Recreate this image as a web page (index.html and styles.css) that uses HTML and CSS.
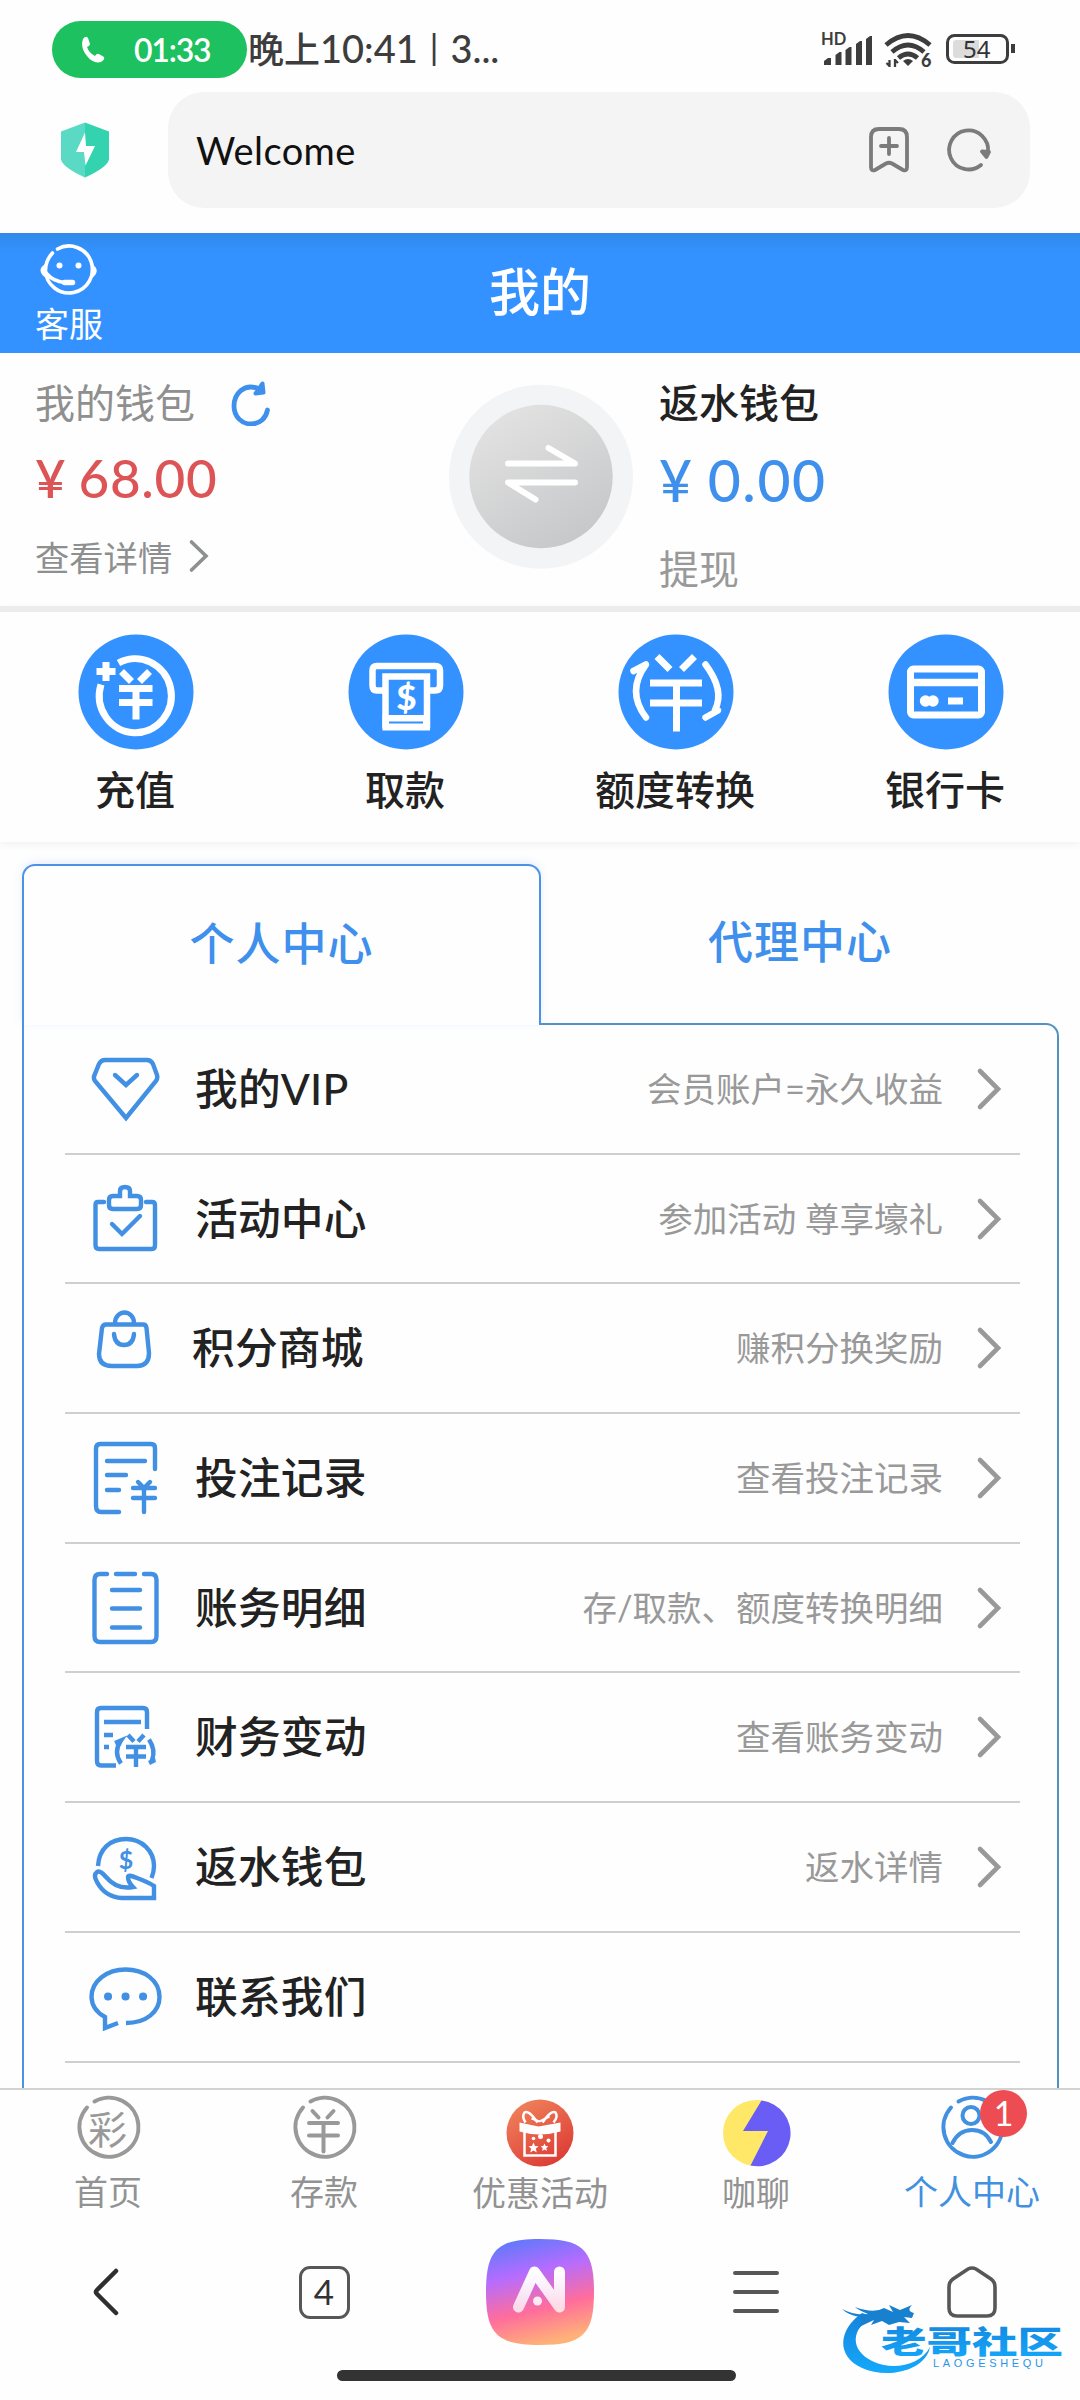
FILE: index.html
```html
<!DOCTYPE html>
<html lang="zh-CN">
<head>
<meta charset="utf-8">
<title>Welcome</title>
<link rel="stylesheet" href="styles.css">
</head>
<body>
<div class="screen">
  <header class="status">
    <div class="call-pill">
      <svg class="call-icon" width="24" height="28" viewBox="0 0 24 28"><path d="M2 3Q5-1 7 2L9 8Q9 10 6 11Q8 17 14 20Q16 17 18 18L23 21Q24 24 20 26Q12 28 6 20Q-1 12 2 3Z" fill="#fff"/></svg>
      <span>01:33</span>
    </div>
    <span class="clock"><span class="clock-cjk">晚上</span>10:41<span class="bar">|</span>3...</span>
    <svg class="status-icons" width="200" height="40" viewBox="820 30 200 40">
      <g fill="#3d3d3d">
        <text x="821" y="45" class="hd">HD</text>
        <path d="M824 65v-4l4-3h3v7zM835.500 65v-10l4-3h2v13zM845.500 65v-15l4-3h2v18zM856 65v-21l4-3h2v24zM866 65v-26l4-3h2v29z"/>
        <path d="M903 61q5-4 10 0l-5 5z"/>
        <text x="921" y="67" class="wifi-num">6</text>
      </g>
      <g fill="none" stroke="#3d3d3d" stroke-width="4.800">
        <path d="M886 45Q908 26 930 45"/><path d="M892 52Q908 38 924 52"/><path d="M898.500 58Q908 50 917.500 58"/>
        <path d="M889.500 67v-7M895 59v8M889.500 66l-3-3M895 60l3 3" stroke-width="2.300"/>
        <rect x="947.500" y="35.500" width="60" height="27" rx="7" stroke-width="3"/>
        <path d="M1013 44v9" stroke-width="4"/>
      </g>
      <path d="M953 43q0-3 3-3h23v18h-23q-3 0-3-3z" fill="#dcdcdc"/>
      <text x="963" y="57.800" class="battery">54</text>
    </svg>
  </header>

  <div class="browser-bar">
    <svg class="shield" width="50" height="58" viewBox="60 121.500 50 58">
      <path d="M85 123L109 132V160Q107 168 85 178Z" fill="#34d3b0"/>
      <path d="M85 123L61 132V160Q63 168 85 178Z" fill="#5adac4"/>
      <path d="M85 133L76 152.500H84L85.500 166L95 146.500H86Z" fill="#fff"/>
    </svg>
    <div class="address">
      <span>Welcome</span>
      <svg width="124" height="50" viewBox="868 125 124 50" fill="none" stroke="#7b7b7b" stroke-width="3.800" stroke-linecap="round" stroke-linejoin="round">
        <path d="M871 167V137Q871 129 879 129H899Q907 129 907 137V167Q907 171.500 903 170L892 163.500Q889 162 886 163.500L875 170Q871 171.500 871 167ZM889 138V154M881 146H897"/>
        <path d="M981 165A19.500 19.500 0 1 1 988 152"/><path d="M982 151.500L989 152L986.500 157Z" fill="#7b7b7b"/>
      </svg>
    </div>
  </div>

  <div class="page-head">
    <a class="service">
      <svg width="62" height="54" viewBox="38.500 242.500 62 54" fill="none" stroke="#fff" stroke-width="3.600" stroke-linecap="round">
        <path d="M58 248.500A23.500 23.500 0 1 1 46 270Q46 260 53 252.500"/>
        <path d="M47 273Q54 281 65 282"/><path d="M65 282H73" stroke-width="5.500"/>
        <path d="M46 264Q37 270 47 277ZM92 264Q101 270 92 277Z" fill="#fff" stroke-width="1.500"/>
        <circle cx="60" cy="265" r="3" fill="#fff" stroke="none"/><circle cx="79" cy="265" r="3" fill="#fff" stroke="none"/>
      </svg>
      <span>客服</span>
    </a>
    <h1>我的</h1>
  </div>

  <section class="wallet">
    <div class="wallet-main">
      <div class="wallet-name">我的钱包
        <svg width="42" height="46" viewBox="229 381 42 46" fill="none" stroke="#3f8fec" stroke-width="4.800" stroke-linecap="round"><path d="M257 389.500C243 384 233 395 233 407C233 418 241 425 250 425C259 425 265 419 266.500 411"/><path d="M261.500 384.500L262.500 393.500L254.500 394.500Z" fill="#3f8fec" stroke-linejoin="round" stroke-width="4"/></svg>
      </div>
      <div class="amount red">¥<span>68.00</span></div>
      <div class="detail">查看详情
        <svg width="22" height="36" viewBox="188 539 22 36"><path d="M191.500 543L206 557L191.500 571" fill="none" stroke="#8e8f8f" stroke-width="3.600" stroke-linecap="round"/></svg>
      </div>
    </div>
    <svg class="swap" width="184" height="186" viewBox="449 384 184 186">
      <defs><linearGradient id="swapFill" x1="0.200" y1="0" x2="0.800" y2="1"><stop offset="0" stop-color="#e3e3e2"/><stop offset="1" stop-color="#c5c6c9"/></linearGradient></defs>
      <circle cx="541" cy="476.800" r="92" fill="#f3f4f6"/>
      <circle cx="541" cy="476.500" r="71.700" fill="url(#swapFill)"/>
      <path d="M508 463.500H575L548.500 448M575 482.500H508L535.500 499.500" fill="none" stroke="#fff" stroke-width="6" stroke-linecap="round" stroke-linejoin="round"/>
    </svg>
    <div class="wallet-rebate">
      <div class="wallet-name dark">返水钱包</div>
      <div class="amount blue">¥<span>0.00</span></div>
      <div class="withdraw">提现</div>
    </div>
  </section>

  <section class="actions">
    <a class="action">
      <svg width="116" height="116" viewBox="77.500 633.500 116 116">
        <circle cx="135.500" cy="691.500" r="57.500" fill="#3392ff"/>
        <path d="M118 662.500A36 37 0 1 1 100.500 684M96 671H115M105.500 661.500V680.500M121 671L131 681M149 671L139 681M118.500 688H152M118.500 702H152M135.500 688V719" fill="none" stroke="#fff" stroke-width="7"/>
      </svg>
      <span>充值</span>
    </a>
    <a class="action">
      <svg width="116" height="116" viewBox="347 633.500 116 116">
        <circle cx="405" cy="691.500" r="57.500" fill="#3392ff"/>
        <path d="M383 690H376Q371.500 690 371.500 685V670Q371.500 665.500 376 665.500H434Q439 665.500 439 670V685Q439 690 434 690H427M384.500 728V676H426V728" fill="none" stroke="#fff" stroke-width="6.500"/>
        <path d="M381.500 714.500H429V730H381.500Z" fill="#fff"/><path d="M388 722H422" stroke="#3392ff" stroke-width="2"/>
        <text x="405.500" y="709.500" class="dollar-bold">$</text>
      </svg>
      <span>取款</span>
    </a>
    <a class="action">
      <svg width="116" height="116" viewBox="618 633.500 116 116">
        <circle cx="676" cy="691.500" r="57.500" fill="#3392ff"/>
        <g fill="none" stroke="#fff" stroke-width="7">
          <path d="M657 656L670 669M694.500 656L681.500 669M650 682.500H702M650 702.500H702M676.500 682V731"/>
          <path d="M633.500 670.500L646 664Q626 691 646 717M705.500 664Q725 690 715 709.500L718 710L705.500 717" stroke-width="6.500" stroke-linecap="round" stroke-linejoin="round"/>
        </g>
      </svg>
      <span>额度转换</span>
    </a>
    <a class="action">
      <svg width="116" height="116" viewBox="888 633.500 116 116">
        <circle cx="946" cy="691.500" r="57.500" fill="#3392ff"/>
        <rect x="910.500" y="668.500" width="71" height="46" rx="3" fill="none" stroke="#fff" stroke-width="7"/>
        <path d="M908 682H984" stroke="#fff" stroke-width="7.500"/>
        <circle cx="925.500" cy="700.500" r="5.700" fill="#fff"/><circle cx="933" cy="700.500" r="5.700" fill="#fff"/><path d="M948 697H963V704H948Z" fill="#fff"/>
      </svg>
      <span>银行卡</span>
    </a>
  </section>

  <section class="center">
    <nav class="tabs">
      <a class="tab active">个人中心</a>
      <a class="tab">代理中心</a>
    </nav>
    <div class="menu">
      <a class="row">
        <svg class="row-icon" viewBox="87 1048 76 80"><path d="M105 1059H147Q151 1059 153 1063L157 1074Q158 1077 156 1080L126 1117L95 1080Q93 1077 94.500 1074L99 1063Q101 1059 105 1059Z"/><path d="M115 1074L126 1084L137 1074"/></svg>
        <span class="name">我的VIP</span><span class="hint">会员账户=永久收益</span>
        <svg class="chev" viewBox="0 0 28 44"><path d="M4 4L22 22L4 40"/></svg>
      </a>
      <a class="row">
        <svg class="row-icon" viewBox="87 1178 76 80"><path d="M104 1201H98Q95.500 1201 95.500 1204V1244Q95.500 1248 99 1248H152Q155 1248 155 1244V1204Q155 1201 152 1201H146M113 1195H120V1190Q120 1186 125 1186Q130 1186 130 1190V1195H137Q141 1195 141 1199V1204Q141 1208 137 1208H113Q109 1208 109 1204V1199Q109 1195 113 1195ZM112 1223L122 1233L140 1215"/></svg>
        <span class="name">活动中心</span><span class="hint">参加活动 尊享壕礼</span>
        <svg class="chev" viewBox="0 0 28 44"><path d="M4 4L22 22L4 40"/></svg>
      </a>
      <a class="row">
        <svg class="row-icon" viewBox="87 1308 76 80"><path d="M106 1324.500H143Q146 1324.500 146.500 1328L149 1353Q149 1366 137 1366H112Q99 1366 99 1354L102 1328Q103 1324.500 106 1324.500ZM115 1323A9.500 10.500 0 0 1 134 1323M114 1334Q115 1345 124 1345Q133 1345 134 1334"/></svg>
        <span class="name shift">积分商城</span><span class="hint">赚积分换奖励</span>
        <svg class="chev" viewBox="0 0 28 44"><path d="M4 4L22 22L4 40"/></svg>
      </a>
      <a class="row">
        <svg class="row-icon" viewBox="87 1437 76 80"><path d="M155 1468V1447Q155 1443 151 1443H100Q96 1443 96 1448V1505Q96 1511 101 1511H119M107 1460H145M107 1474H126M107 1489H119M138 1481L144 1487L150 1481M133 1487H155M133 1497H155M144 1487V1511"/></svg>
        <span class="name">投注记录</span><span class="hint">查看投注记录</span>
        <svg class="chev" viewBox="0 0 28 44"><path d="M4 4L22 22L4 40"/></svg>
      </a>
      <a class="row">
        <svg class="row-icon" viewBox="87 1567 76 80"><path d="M107 1573H100Q94.500 1573 94.500 1579V1635Q94.500 1641 100 1641H151Q156.500 1641 156.500 1635V1579Q156.500 1573 151 1573H144M116 1573H135M112 1589H140M112 1607.500H140M112 1626.500H140"/></svg>
        <span class="name">账务明细</span><span class="hint">存/取款、额度转换明细</span>
        <svg class="chev" viewBox="0 0 28 44"><path d="M4 4L22 22L4 40"/></svg>
      </a>
      <a class="row">
        <svg class="row-icon butt" viewBox="87 1697 76 80"><path d="M147 1729V1712Q147 1708 143 1708H101Q97 1708 97 1712V1761Q97 1765.500 101 1765.500H116M104 1722H141M104 1735H113M104 1747H109M128 1735L134 1741.500M144 1735L138 1741.500M126 1747H146M126 1756.500H146M136 1747V1767M115 1743L121 1740.500Q113 1752 121 1763.500M149 1739.500Q156 1750 152 1760L155 1760L149 1763"/></svg>
        <span class="name">财务变动</span><span class="hint">查看账务变动</span>
        <svg class="chev" viewBox="0 0 28 44"><path d="M4 4L22 22L4 40"/></svg>
      </a>
      <a class="row">
        <svg class="row-icon butt" viewBox="87 1826 76 80"><path d="M98 1865C99 1848 110 1838 126 1838C142 1838 154 1850 154 1865Q154 1871 151.500 1877M97 1871Q93 1874 97 1881Q105 1896 122 1897H154V1885Q148 1881 137 1877Q128 1873 128 1876Q128 1881 133 1886Q117 1889 106 1876Q100 1869 97 1871Z"/><text x="126" y="1868" class="dollar">$</text></svg>
        <span class="name">返水钱包</span><span class="hint">返水详情</span>
        <svg class="chev" viewBox="0 0 28 44"><path d="M4 4L22 22L4 40"/></svg>
      </a>
      <a class="row">
        <svg class="row-icon butt" viewBox="87 1956 76 80"><path d="M126 2022C146 2022 159.500 2011 159.500 1996C159.500 1979 144 1968.500 125.500 1968.500C107 1968.500 91.500 1980 91.500 1996Q92 2009 105 2016V2027L118 2022"/><path d="M108 1995.500h.1M125.500 1995.500h.1M143 1995.500h.1" class="dots"/></svg>
        <span class="name">联系我们</span>
      </a>
    </div>
  </section>

  <nav class="tabbar">
    <a class="item">
      <svg width="70" height="70" viewBox="74 2093 70 70" fill="none" stroke="#999" stroke-width="4" stroke-linecap="round"><path d="M95.500 2100.500A29.500 29.500 0 1 1 88 2106.500"/><text x="108.500" y="2143" class="cai">彩</text></svg>
      <span>首页</span>
    </a>
    <a class="item">
      <svg width="70" height="70" viewBox="290 2093 70 70" fill="none" stroke="#999" stroke-width="4" stroke-linecap="round"><path d="M311.500 2100.500A29.500 29.500 0 1 1 304 2106.500M313.500 2110L319.500 2116.500M334.500 2110L328.500 2116.500M310 2122H339M310 2134.500H339M324.500 2122V2150.500"/></svg>
      <span>存款</span>
    </a>
    <a class="item low">
      <svg width="70" height="70" viewBox="505.500 2097.500 70 70">
        <defs><linearGradient id="gift" x1="0" y1="0" x2="0.600" y2="1"><stop offset="0" stop-color="#f2895f"/><stop offset="1" stop-color="#dd3f37"/></linearGradient></defs>
        <circle cx="540.500" cy="2132.500" r="33.500" fill="url(#gift)"/>
        <path d="M538 2122Q529 2109 525 2112Q522 2116 526 2122M543 2122Q552 2109 556 2112Q559 2116 554 2122" fill="none" stroke="#fff" stroke-width="2.500"/>
        <path d="M532 2118L540 2121L550 2116" stroke="#fff" stroke-width="2" fill="none"/>
        <path d="M520 2122L539 2126L561 2122V2131Q540 2137 520 2131Z" fill="#fff"/>
        <path d="M525 2131V2155H556V2131" fill="none" stroke="#fff" stroke-width="2.500"/>
        <path d="M534 2142l1.500 3.500 3.500.3-2.700 2.400 1 3.800-3.300-2-3.300 2 1-3.800-2.700-2.400 3.500-.3zM545 2143l1.200 2.500 2.600.2-2 2 .6 2.800-2.400-1.500-2.400 1.500.6-2.800-2-2 2.600-.2z" fill="#fff"/><circle cx="534" cy="2138" r="1.800" fill="#fff"/><circle cx="549" cy="2140" r="2" fill="#fff"/><circle cx="541" cy="2136" r="2.500" fill="#fff"/>
      </svg>
      <span>优惠活动</span>
    </a>
    <a class="item low">
      <svg width="70" height="70" viewBox="722 2097.500 70 70"><circle cx="757" cy="2132.500" r="33" fill="#ffe768"/><path d="M762.500 2100L744 2130.500H769L751.500 2165A33 33 0 1 0 762.500 2100Z" fill="#6a5df5"/></svg>
      <span>咖聊</span>
    </a>
    <a class="item on">
      <svg width="70" height="70" viewBox="938 2093 70 70" fill="none" stroke="#4290e0" stroke-width="4" stroke-linecap="round"><path d="M959.500 2100.500A29.500 29.500 0 1 1 952 2106.500"/><circle cx="972" cy="2114.500" r="8.500"/><path d="M953.500 2142Q960 2129 973 2129Q986 2129 992 2141"/></svg>
      <span>个人中心</span>
      <b class="badge">1</b>
    </a>
  </nav>

  <nav class="toolbar">
    <a><svg width="60" height="60" viewBox="78 2263 60 60" fill="none" stroke="#2f2f2f" stroke-width="4.500" stroke-linecap="round"><path d="M116 2272L97 2291Q95 2293 97 2295L116 2314"/></svg></a>
    <a><b class="tab-count">4</b></a>
    <a><svg width="108" height="106" viewBox="486 2239 108 106">
      <defs><linearGradient id="ai" x1="0.250" y1="0" x2="0.500" y2="1"><stop offset="0" stop-color="#5e79fb"/><stop offset=".33" stop-color="#b56cff"/><stop offset=".68" stop-color="#ff6d9c"/><stop offset="1" stop-color="#ffb277"/></linearGradient>
      <linearGradient id="aiA" x1="0" y1="0" x2="0" y2="1"><stop offset="0" stop-color="#fff"/><stop offset="1" stop-color="#fff" stop-opacity=".75"/></linearGradient></defs>
      <path d="M540 2239C583 2239 594 2250 594 2292S583 2345 540 2345S486 2334 486 2292S497 2239 540 2239Z" fill="url(#ai)"/>
      <path d="M518.500 2307L534.500 2272L559.500 2307V2272" fill="none" stroke="url(#aiA)" stroke-width="11" stroke-linecap="round" stroke-linejoin="round"/><circle cx="537.500" cy="2301" r="4.500" fill="#fff" opacity=".85"/>
    </svg></a>
    <a><svg width="60" height="60" viewBox="726 2263 60 60" stroke="#575757" stroke-width="4" stroke-linecap="round"><path d="M735 2274H777M735 2293H777M735 2312H777"/></svg></a>
    <a><svg width="60" height="60" viewBox="942 2262 60 60" fill="none" stroke="#575757" stroke-width="3.600"><path d="M968 2269Q972 2267 976 2269L991 2279Q995 2282 995 2287V2308Q995 2316 987 2316H957Q949 2316 949 2308V2287Q949 2282 953 2279Z"/></svg></a>
  </nav>
  <div class="home-bar"></div>

  <svg class="watermark" width="236" height="84" viewBox="836 2296 236 84">
    <defs><linearGradient id="wm" x1="0" y1="0" x2="0" y2="1"><stop offset="0" stop-color="#1583dc"/><stop offset="1" stop-color="#14a9fb"/></linearGradient></defs>
    <path d="M862 2313C838 2330 836 2356 862 2368C888 2380 926 2370 930 2347C920 2366 892 2371 872 2361C850 2350 850 2328 874 2317Z" fill="url(#wm)"/>
    <path d="M842 2309Q855 2316 868 2314Q858 2310 855 2307Q874 2314 884 2308L893 2312L889 2305L900 2310L912 2305Q906 2311 914 2313L912 2318L904 2317L910 2323L899 2322L889 2325L882 2321L871 2325L874 2320L859 2327Q863 2320 860 2317Q848 2315 842 2309Z" fill="#1781cf"/>
    <text x="881" y="2353" textLength="182" lengthAdjust="spacingAndGlyphs" class="wm-name">老哥社区</text>
    <text x="933" y="2366.500" textLength="110" class="wm-latin">LAOGESHEQU</text>
  </svg>
</div>
</body>
</html>
```
FILE: styles.css
```css
* { box-sizing: border-box; }
body { margin: 0; background: #fff; font-family: Lato, "Noto Sans CJK SC", sans-serif; color: #222; }
svg { display: block; flex: none; }
.screen { position: relative; width: 1080px; height: 2400px; overflow: hidden; background: #fefefe; display: flex; flex-direction: column; }

.status { height: 92px; padding: 21px 60px 15px 52px; display: flex; align-items: flex-start; }
.call-pill { width: 195px; height: 57px; border-radius: 29px; background: #1dc15f; color: #fff; display: flex; align-items: center; padding-left: 29px; gap: 29px; font-size: 32px; font-weight: 600; line-height: 55px; white-space: nowrap; }
.call-pill span { letter-spacing: -1.200px; }
.clock { margin-left: 1px; line-height: 55px; font-size: 38px; font-weight: 500; color: #3d3d3d; white-space: nowrap; width: 300px; letter-spacing: 0; }
.clock-cjk { font-size: 36px; letter-spacing: 0; }
.clock .bar { margin: 0 12px; font-size: 34px; position: relative; top: -3px; }
.status-icons { margin: 9px 0 0 auto; }
.hd { font: 700 16.500px Lato, sans-serif; }
.wifi-num { font: 900 18px Lato, sans-serif; }
.battery { font: 400 24px "Noto Sans", sans-serif; fill: #333; }

.browser-bar { height: 141px; padding: 0 50px 25px 60px; display: flex; align-items: center; justify-content: space-between; }
.address { width: 862px; height: 116px; border-radius: 36px; background: #f4f4f4; display: flex; align-items: center; justify-content: space-between; padding: 0 38px 0 28px; font-size: 38px; letter-spacing: .4px; color: #111; }

.page-head { height: 120px; background: linear-gradient(#318ae9, #3392ff 20px); color: #fff; display: grid; grid-template-columns: 138px 1fr 138px; align-items: center; }
.service { height: 120px; display: flex; flex-direction: column; align-items: center; padding-top: 10px; font-size: 34px; line-height: 53px; }
.service svg { height: 54px; }
.page-head h1 { margin: 0 0 2px; text-align: center; font-size: 51px; font-weight: 500; line-height: 60px; }

.wallet { height: 253px; display: grid; grid-template-columns: 449px 184px 1fr; background: #fefefe; }
.wallet-main { padding: 20px 0 0 35px; }
.wallet-rebate { padding: 20px 0 0 26px; }
.wallet-name { height: 60px; display: flex; align-items: center; gap: 35px; font-size: 40px; color: #8f8f8f; line-height: 60px; }
.wallet-name.dark { color: #222; font-weight: 500; }
.amount { line-height: 90px; height: 92px; font-size: 53px; letter-spacing: .7px; font-weight: 500; }
.amount span { margin-left: 12px; }
.red { color: #dc5456; }
.blue { color: #3f8fec; font-size: 57px; height: 104px; line-height: 95px; letter-spacing: 1.600px; }
.blue span { margin-left: 14px; }
.detail { height: 62px; display: flex; align-items: center; gap: 16px; font-size: 34.300px; color: #8e8f8f; }
.withdraw { line-height: 65px; font-size: 40px; color: #999; }
.swap { margin-top: 31px; }

.actions { height: 236px; border-top: 6px solid #ececec; display: grid; grid-template-columns: repeat(4, 1fr); box-shadow: 0 3px 8px rgba(0,0,0,.05); }
.action { display: flex; flex-direction: column; align-items: center; padding-top: 22px; font-size: 40px; font-weight: 500; line-height: 60px; gap: 10px; }
.action svg { margin-left: 1px; }

.center { padding: 22px 21px 0 22px; height: 1246px; overflow: hidden; }
.tabs { display: grid; grid-template-columns: 519px 1fr; height: 161px; }
.tab { text-align: center; font-size: 45px; font-weight: 500; letter-spacing: 1px; line-height: 156px; color: #3f8fec; }
.tab:not(.active) { border: solid #5093c8; border-width: 0 0 2px; border-bottom-right-radius: 0; margin-right: 12px; padding-left: 12px; }
.tab.active { border: 2px solid #4a92e4; border-bottom: 0; border-radius: 13px 13px 0 0; box-shadow: 0 -2px 8px rgba(60,130,230,.13); }
.menu { margin-top: -2px; padding: 2px 39px 0 43px; height: 1066px; position: relative; }
/* side rules of the panel; the right one curves into the rule under the tabs */
.menu::before { content: ""; position: absolute; left: 0; top: 0; bottom: 0; width: 2px; background: #4a92e4; }
.menu::after { content: ""; position: absolute; right: 0; top: 0; bottom: 0; width: 13px; border: solid #5093c0; border-width: 2px 2px 0 0; border-top-right-radius: 13px; }
.row { height: 129.700px; border-bottom: 2px solid #cfcfcf; display: flex; align-items: center; padding: 0 16px 0 22px; }
.row-icon { width: 76px; height: 80px; margin-right: 32px; fill: none; stroke: #4290e3; stroke-width: 4.400px; stroke-linecap: round; }
.row-icon.butt { stroke-linecap: butt; }
.row-icon .dots { stroke-width: 8px; stroke-linecap: round; }
.name { font-size: 42.700px; font-weight: 500; letter-spacing: .2px; line-height: 60px; }
.name.shift { margin-left: -3px; }
.hint { margin-left: auto; font-size: 34.500px; color: #999; line-height: 50px; }
.chev { width: 28px; height: 44px; margin-left: 33px; fill: none; stroke: #999; stroke-width: 4.600px; stroke-linecap: round; }
.dollar { font: 700 25px Lato, sans-serif; fill: #4290e3; stroke: none; text-anchor: middle; }
.dollar-bold { font: 900 35px Lato, sans-serif; fill: #fff; text-anchor: middle; }

.tabbar { height: 124px; border-top: 2px solid #d2d2d2; display: grid; grid-template-columns: repeat(5, 1fr); }
.item { position: relative; display: flex; flex-direction: column; align-items: center; padding-top: 4px; font-size: 34px; line-height: 55px; color: #929292; }
.item.low { padding-top: 8px; }
.item.low span { margin-top: -3px; }
.item.on { color: #4290e0; }
.cai { font: 400 39px "Noto Sans CJK SC", sans-serif; fill: #999; stroke: none; text-anchor: middle; }
.badge { position: absolute; left: 116px; top: 0; width: 47px; height: 47px; border-radius: 50%; background: #ed4d52; color: #fff; font-size: 34px; font-weight: 400; line-height: 45px; text-align: center; }

.toolbar { height: 158px; padding-top: 2px; display: grid; grid-template-columns: repeat(5, 1fr); align-items: center; justify-items: center; }
.tab-count { display: block; width: 51px; height: 53px; border: 3.500px solid #575757; border-radius: 11px; font-size: 35px; font-weight: 400; line-height: 45px; text-align: center; color: #333; }
.home-bar { width: 399px; height: 11px; border-radius: 6px; background: #333; margin: 0 0 0 337px; }
.watermark { position: absolute; left: 836px; top: 2296px; }
.wm-name { font: 900 31px "Noto Sans CJK SC", sans-serif; fill: url(#wm); }
.wm-latin { font: 400 11px "Liberation Sans", sans-serif; fill: #2a95e6; }
```
